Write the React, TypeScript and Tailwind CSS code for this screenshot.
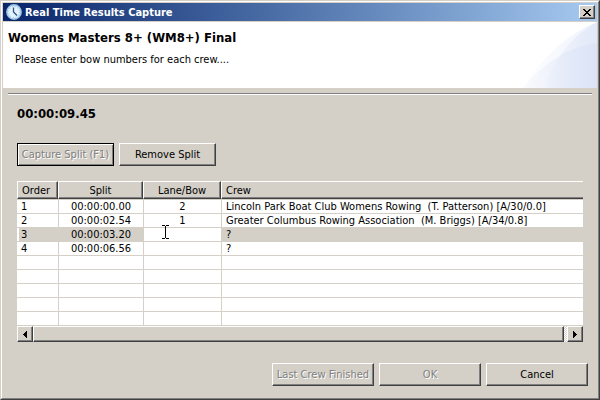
import React from "react";

const bevel =
  "border border-t-white border-l-white border-r-[#404040] border-b-[#404040] shadow-[inset_-1px_-1px_0_#808080]";

const rows = [
  { order: "1", split: "00:00:00.00", lane: "2", crew: "Lincoln Park Boat Club Womens Rowing  (T. Patterson) [A/30/0.0]" },
  { order: "2", split: "00:00:02.54", lane: "1", crew: "Greater Columbus Rowing Association  (M. Briggs) [A/34/0.8]" },
  { order: "3", split: "00:00:03.20", lane: "", crew: "?", selected: true },
  { order: "4", split: "00:00:06.56", lane: "", crew: "?" },
  {},
  {},
  {},
  {},
  {},
] as { order?: string; split?: string; lane?: string; crew?: string; selected?: boolean }[];

function ClockIcon() {
  return (
    <svg width="16" height="16" viewBox="0 0 16 16" aria-hidden="true">
      <circle cx="8" cy="8" r="7.1" fill="#e4f2fb" stroke="#9cc6e6" strokeWidth="1.6" />
      <circle cx="8" cy="8" r="5.4" fill="none" stroke="#8fb4d2" strokeWidth="0.9" strokeDasharray="0.9 1.93" />
      <path d="M7.5 3.5V8L11 11.5" fill="none" stroke="#25578c" strokeWidth="1.3" />
    </svg>
  );
}

function HeaderArt() {
  return (
    <svg width="74" height="66" viewBox="0 0 74 66" className="block" aria-hidden="true">
      <defs>
        <linearGradient id="sweep" x1="0" x2="1" y1="0" y2="0">
          <stop offset="0" stopColor="#fefeff" />
          <stop offset="1" stopColor="#eff3fc" />
        </linearGradient>
        <linearGradient id="inner" x1="0" x2="1" y1="0" y2="0">
          <stop offset="0" stopColor="#d8e1f5" stopOpacity="0.1" />
          <stop offset="1" stopColor="#d8e1f5" stopOpacity="0.6" />
        </linearGradient>
      </defs>
      <path d="M0 66C16 40 40 14 74 0V66Z" fill="url(#sweep)" />
      <path d="M22 66C30 38 48 14 74 0V66Z" fill="url(#inner)" />
      <path d="M0 66C18 44 44 24 74 21V66Z" fill="url(#inner)" />
    </svg>
  );
}

function PushButton({ children, disabled, wide }: { children: React.ReactNode; disabled?: boolean; wide?: boolean }) {
  return (
    <button
      type="button"
      disabled={disabled}
      className={`h-[23px] ${wide ? "w-[102px]" : "w-[97px]"} ${bevel} ${
        disabled ? "text-[#808080] [text-shadow:1px_1px_0_#fff]" : "text-black"
      } whitespace-nowrap`}
    >
      {children}
    </button>
  );
}

export default function App() {
  return (
    <div className="flex min-h-screen flex-col border-t border-l border-[#d4d0c8] border-r border-b border-r-[#404040] border-b-[#404040] bg-[#d4d0c8] font-['DejaVu_Sans_Condensed','DejaVu_Sans',sans-serif] text-[11px] leading-[13px] text-black">
      <div className="flex flex-1 flex-col border border-t-white border-l-white border-r-[#808080] border-b-[#808080] p-px">
        <header className="flex h-[18px] items-center bg-linear-to-r from-[#0a246a] to-[#a6caf0] pr-[2px] pl-[3px]">
          <ClockIcon />
          <h1 className="ml-[3px] flex-1 font-bold text-white">Real Time Results Capture</h1>
          <button type="button" aria-label="Close" className={`flex h-[14px] w-4 items-center justify-center bg-[#d4d0c8] ${bevel}`}>
            <svg width="8" height="7" viewBox="0 0 8 7" shapeRendering="crispEdges" aria-hidden="true">
              <path d="M0 0h2v1h1v1h2v-1h1v-1h2v1h-1v1h-1v1h-1v1h1v1h1v1h1v1h-2v-1h-1v-1h-2v1h-1v1h-2v-1h1v-1h1v-1h1v-1h-1v-1h-1v-1h-1z" />
            </svg>
          </button>
        </header>

        <section className="mt-px flex h-[66px] justify-between bg-white">
          <div className="pt-2 pl-[5px]">
            <h2 className="text-[13px] leading-4 font-bold">Womens Masters 8+ (WM8+) Final</h2>
            <p className="mt-[7px] ml-[7px]">Please enter bow numbers for each crew....</p>
          </div>
          <HeaderArt />
        </section>

        <hr className="mx-[5px] mt-[5px] h-[2px] border-t border-b border-t-[#808080] border-b-white" />

        <main className="mt-[11px] px-[14px]">
          <p className="text-[13px] leading-4 font-bold">00:00:09.45</p>
          <div className="mt-[21px] flex gap-[5px]">
            <button
              type="button"
              disabled
              className="h-[23px] w-[97px] border border-black whitespace-nowrap text-[#808080] shadow-[inset_1px_1px_0_#fff,inset_-1px_-1px_0_#808080] [text-shadow:1px_1px_0_#fff]"
            >
              Capture Split (F1)
            </button>
            <PushButton>Remove Split</PushButton>
          </div>

          <table className="mt-[15px] w-full table-fixed border-separate border-spacing-0 bg-white">
            <colgroup>
              <col className="w-[41px]" />
              <col className="w-[85px]" />
              <col className="w-[78px]" />
              <col />
            </colgroup>
            <thead>
              <tr className="h-[18px] bg-[#d4d0c8]">
                <th className={`p-0 pl-1 text-left font-normal ${bevel}`}>Order</th>
                <th className={`p-0 font-normal ${bevel}`}>Split</th>
                <th className={`p-0 font-normal ${bevel}`}>Lane/Bow</th>
                <th className="border-t border-b border-l border-t-white border-b-[#404040] border-l-white p-0 pl-1 text-left font-normal shadow-[inset_0_-1px_0_#808080]">
                  Crew
                </th>
              </tr>
              <tr className="h-px bg-[#d4d0c8]">
                <td colSpan={4} className="p-0" />
              </tr>
            </thead>
            <tbody>
              {rows.map((row, i) => (
                <tr
                  key={i}
                  className={`h-[14px] leading-3 *:border-b *:border-[#d4d0c8] *:px-0 *:pt-px *:pb-0 ${row.selected ? "bg-[#d4d0c8]" : ""}`}
                >
                  <td className={row.selected ? "shadow-[inset_2px_0_0_#fff]" : ""}>
                    <span className="pl-1">{row.order}</span>
                  </td>
                  <td className="border-l text-center">{row.split}</td>
                  <td className={`border-l text-center ${row.selected ? "bg-white" : ""}`}>
                    {row.selected ? (
                      <div className="relative h-3">
                        <input
                          aria-label="Lane/Bow for split 3"
                          className="block h-3 w-full bg-white px-1 text-center outline-none"
                        />
                        <svg
                          width="7"
                          height="14"
                          viewBox="0 0 7 14"
                          className="absolute -top-1 left-[18px]"
                          shapeRendering="crispEdges"
                          aria-hidden="true"
                        >
                          <path d="M0 0h3v1h1v-1h3v1h-3v12h3v1h-3v-1h-1v1h-3v-1h3v-12h-3z" />
                        </svg>
                      </div>
                    ) : (
                      row.lane
                    )}
                  </td>
                  <td className="border-l whitespace-pre">
                    <span className="pl-1">{row.crew}</span>
                  </td>
                </tr>
              ))}
            </tbody>
          </table>

          <div className="flex h-4">
            <button type="button" aria-label="Scroll left" className={`flex w-4 items-center justify-center ${bevel}`}>
              <svg width="4" height="7" viewBox="0 0 4 7" shapeRendering="crispEdges" aria-hidden="true">
                <path d="M4 0v7L0 3.5z" />
              </svg>
            </button>
            <div className={`flex-1 ${bevel}`} />
            <div className="w-[3px] bg-[repeating-conic-gradient(#fff_0_25%,#d4d0c8_0_50%)] bg-size-[2px_2px]" />
            <button type="button" aria-label="Scroll right" className={`flex w-4 items-center justify-center ${bevel}`}>
              <svg width="4" height="7" viewBox="0 0 4 7" shapeRendering="crispEdges" aria-hidden="true">
                <path d="M0 0v7L4 3.5z" />
              </svg>
            </button>
          </div>
        </main>

        <footer className="mt-auto flex justify-end gap-[5px] pr-[9px] pb-[11px]">
          <PushButton wide disabled>
            Last Crew Finished
          </PushButton>
          <PushButton wide disabled>
            OK
          </PushButton>
          <PushButton wide>Cancel</PushButton>
        </footer>
      </div>
    </div>
  );
}
